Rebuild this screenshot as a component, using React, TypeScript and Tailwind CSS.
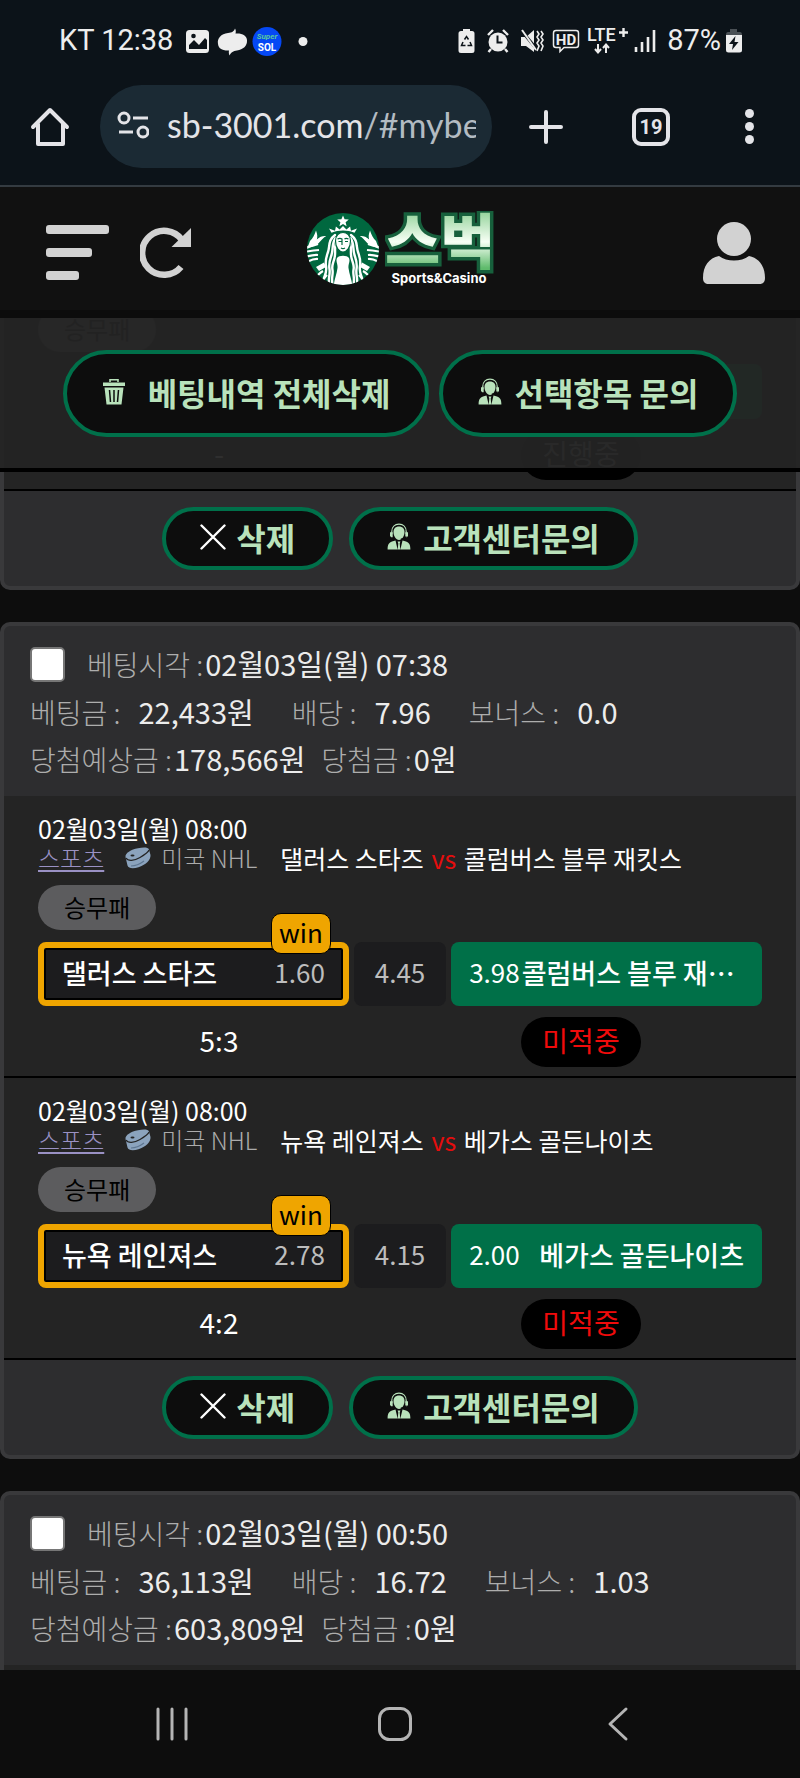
import type { ReactNode } from "react";

type Game = {
  date?: string;
  home: string;
  away: string;
  odds: [string, string, string];
  awayLabel?: string;
  score: string;
  status: string;
  win?: boolean;
};

type Slip = {
  id: string;
  placed: string;
  stake: string;
  rate: string;
  bonus: string;
  expected: string;
  paid: string;
  games: Game[];
};

const slips: Slip[] = [
  {
    id: "slip-0738",
    placed: "02월03일(월) 07:38",
    stake: "22,433원",
    rate: "7.96",
    bonus: "0.0",
    expected: "178,566원",
    paid: "0원",
    games: [
      {
        date: "02월03일(월) 08:00",
        home: "댈러스 스타즈",
        away: "콜럼버스 블루 재킷스",
        awayLabel: "콜럼버스 블루 재⋯",
        odds: ["1.60", "4.45", "3.98"],
        score: "5:3",
        status: "미적중",
        win: true,
      },
      {
        date: "02월03일(월) 08:00",
        home: "뉴욕 레인져스",
        away: "베가스 골든나이츠",
        odds: ["2.78", "4.15", "2.00"],
        score: "4:2",
        status: "미적중",
        win: true,
      },
    ],
  },
];

function SirenLogo() {
  return (
    <svg viewBox="0 0 72 72" className="size-[72px]" aria-hidden="true">
      <defs>
        <clipPath id="disc">
          <circle cx="36" cy="36" r="36" />
        </clipPath>
      </defs>
      <circle cx="36" cy="36" r="36" fill="#00683f" />
      <g clipPath="url(#disc)">
        <path d="M36 2.5l1.6 3.8 4.2.3-3.2 2.700 1 4-3.600-2.200-3.600 2.200 1-4-3.200-2.700 4.200-.3z" fill="#fff" />
        <path d="M36 13l3.400 3.400 3.700-3 .9 4.300 6-2.200-2.500 4.300c-7-3-16-3-23 0L22 15.500l6 2.200.9-4.300 3.700 3z" fill="#fff" />
        <path
          d="M9 17.500c1.500 4 1.600 6 .8 9 3-3 6.500-4 9.500-3.500-3 1.500-4.500 4-8 7.500L0 36l3-8c3-3 4.600-6 6-10.500zM63 17.500c-1.500 4-1.600 6-.8 9-3-3-6.500-4-9.500-3.500 3 1.500 4.500 4 8 7.500L72 36l-3-8c-3-3-4.600-6-6-10.500z"
          fill="#fff"
        />
        <g stroke="#fff" strokeWidth="2.200" fill="none">
          <path d="M0 34q6-1 11-3M0 38.500q7-1 12-1.500M0 43.500q7-2 11-1.500M1 48.500q6-3 10-2.500M11 62q3-3 5-4M16 67q2-3 4-5" />
          <path d="M72 34q-6-1-11-3M72 38.500q-7-1-12-1.500M72 43.500q-7-2-11-1.500M71 48.500q-6-3-10-2.500M61 62q-3-3-5-4M56 67q-2-3-4-5" />
        </g>
        <path d="M9 54l8-4.500 2 4.500-7 4zM63 54l-8-4.500-2 4.500 7 4z" fill="#fff" />
        <path d="M30 45c2-3 10-3 12 0 1.500 4-1 6-.5 10 .8 6 3 11 4 18h-19c1-7 3.200-12 4-18 .5-4-2-6-.5-10z" fill="#fff" />
        <g stroke="#fff" strokeWidth="2.400" fill="none" strokeLinecap="round">
          <path d="M28 22c-7 5-5 11-7 17s-3 8-2 14-1 9-2 12" />
          <path d="M28.500 25c-4 6-2 11-4 17s-3 8-2 14-2 10 0 17" />
          <path d="M29 30c-2 6 0 9-1.500 15s-3 7-2 12-2 9 .5 16" />
          <path d="M44 22c7 5 5 11 7 17s3 8 2 14 1 9 2 12" />
          <path d="M43.500 25c4 6 2 11 4 17s3 8 2 14 2 10 0 17" />
          <path d="M43 30c2 6 0 9 1.500 15s3 7 2 12 2 9-.5 16" />
        </g>
        <path d="M28.500 28c0-5.500 3.500-8.500 7.500-8.500s7.500 3 7.500 8.500c0 6.500-3.500 11-7.500 11s-7.500-4.500-7.500-11z" fill="#fff" stroke="#00683f" strokeWidth="1.200" />
        <path d="M30.500 26q2.500-1.400 4.500 0v6M41.500 26q-2.500-1.400-4 0M31.500 28.500h3M38 28.500h3M34 35q2 1.200 4 0" stroke="#00683f" strokeWidth="1.200" fill="none" />
      </g>
    </svg>
  );
}

function WordMark() {
  return (
    <svg viewBox="0 0 112 76" className="h-[76px] w-[112px]" role="img" aria-label="스벅 Sports&Casino">
      <defs>
        <linearGradient id="mint" x1="0" y1="0" x2="0" y2="1">
          <stop offset="0.2" stopColor="#93d39a" />
          <stop offset="0.55" stopColor="#f7fff5" />
          <stop offset="0.85" stopColor="#5fbb6c" />
        </linearGradient>
      </defs>
      <text
        x="0"
        y="53"
        fontSize="60"
        fontWeight="900"
        stroke="#17603c"
        strokeWidth="7"
        className="font-['Noto_Sans_CJK_KR',sans-serif] [fill:url(#mint)] [paint-order:stroke]"
      >
        스벅
      </text>
      <text x="54" y="72" textAnchor="middle" fontSize="13" fontWeight="700" fill="#fff" className="font-['Inter',sans-serif]">
        Sports&amp;Casino
      </text>
    </svg>
  );
}

function AgentIcon() {
  return (
    <svg viewBox="0 0 24 28" className="h-7 w-6 shrink-0" fill="#b9e2bb" aria-hidden="true">
      <path d="M12 3.500c3.500 0 5.500 2.200 5.500 5.500 0 4-2.500 8-5.500 8s-5.500-4-5.500-8c0-3.300 2-5.500 5.500-5.500z" />
      <path d="M4.800 11V8.500C4.800 4 7.800 1.200 12 1.200s7.200 2.800 7.200 7.300V11" fill="none" stroke="#b9e2bb" strokeWidth="1.200" />
      <path d="M3 9.200h2.700v5H4.200L3 13zM21 9.200h-2.700v5h1.500L21 13z" />
      <path d="M19.300 13.500c-1 2-3 2.700-5.500 2.700" fill="none" stroke="#0d0d0d" strokeWidth="1.300" />
      <path d="M8.500 17.500L10.600 26.500H.6c0-5 1.400-7 4.400-8zM15.500 17.500l-2.100 9h10c0-5-1.400-7-4.400-8zM10.600 18.500h2.800l-.7 2 .6 6h-2.600l.6-6z" />
    </svg>
  );
}

function TrashIcon() {
  return (
    <svg viewBox="0 0 24 28" className="h-7 w-6 shrink-0" aria-hidden="true">
      <path d="M1 4.500h22v3.600H1zM2.500 9.500h19l-2 17h-15z" fill="#b9e2bb" />
      <path d="M8 4V1.800h8V4" fill="none" stroke="#b9e2bb" strokeWidth="1.600" />
      <path d="M7.500 12l1 12M12 12v12M16.500 12l-1 12" stroke="#0d0d0d" strokeWidth="1.500" />
    </svg>
  );
}

function CrossIcon() {
  return (
    <svg viewBox="0 0 26 26" className="size-[26px] shrink-0" aria-hidden="true">
      <path d="M1.500 1.500l23 23M24.500 1.500l-23 23" stroke="#fff" strokeWidth="2.400" strokeLinecap="round" />
    </svg>
  );
}

function PuckIcon() {
  return (
    <svg viewBox="0 0 26 22" className="h-[22px] w-[26px] shrink-0" aria-hidden="true">
      <path d="M.5 10C0 6 6 2.500 13 1.200 19 0 23 .2 24 2.500l1.500 5.500c.5 5-5 10-12 12.200C8 22 3.500 21.500 2.500 18.500z" fill="#8ba3bd" />
      <path d="M1 11c2 3.500 8 3 14-.5 5-3 8.500-5.500 9-7.500" stroke="#242424" strokeWidth="1.200" fill="none" />
      <path d="M6 19c5 0 9-2 13-5" stroke="#5d7590" strokeWidth="1.200" fill="none" />
      <ellipse cx="7.500" cy="8.500" rx="2" ry="1.100" fill="#242424" />
    </svg>
  );
}

function Pill({ tall, gap, icon, children }: { tall?: boolean; gap: string; icon: ReactNode; children: ReactNode }) {
  return (
    <button
      type="button"
      className={`flex items-center rounded-full border-4 border-[#00704a] bg-[#0d0d0d] pb-1 text-[32px] leading-none font-bold whitespace-nowrap text-[#b9e2bb] ${
        tall ? "h-[87px] px-[35px]" : "h-[63px] px-[34px]"
      } ${gap}`}
    >
      {icon}
      <span>{children}</span>
    </button>
  );
}

function GameRow({ game }: { game: Game }) {
  const label = game.awayLabel ?? game.away;
  return (
    <section className="border-b-2 border-black bg-[#242424] px-[34px] pb-[9px]">
      {game.date && (
        <div className="pt-[17px] pb-3 text-[25px] leading-[30px] whitespace-nowrap text-white">
          <p>{game.date}</p>
          <p className="flex items-center">
            <a href="#sports" className="text-2xl leading-[30px] font-light text-[#9a91c4] underline underline-offset-2">
              스포츠
            </a>
            <span className="ml-[21px] flex items-center gap-2.5 text-2xl leading-[30px] font-light text-[#ababab]">
              <PuckIcon />
              미국 NHL
            </span>
            <span className="ml-[23px]">
              {game.home} <span className="mx-0.5 text-[#e50d0d]">vs</span> {game.away}
            </span>
          </p>
        </div>
      )}
      <span className="inline-flex h-[45px] items-center rounded-full bg-[#5c5c5e] px-[26px] pb-0.5 text-2xl leading-none text-black">
        승무패
      </span>
      <div className="mt-3 grid grid-cols-[minmax(0,310fr)_minmax(0,92fr)_minmax(0,310fr)] gap-[5px] text-[26px] leading-none text-[#bdbdbd]">
        <div
          className={`relative flex items-center justify-between rounded-lg bg-[#1c1c1e] pb-1 ${
            game.win ? "h-16 border-[6px] border-[#efa500] px-[18px] ring-2 ring-black ring-inset" : "h-[55px] px-6"
          }`}
        >
          <span className="text-[27px] font-medium whitespace-nowrap text-white">{game.home}</span>
          <span>{game.odds[0]}</span>
          {game.win && (
            <span className="absolute -top-[35px] right-[12px] flex h-[41px] items-center rounded-[10px] border border-black bg-[#efa500] px-[7px] pb-1 text-black">
              win
            </span>
          )}
        </div>
        <div className="flex items-center justify-center rounded-lg bg-[#1c1c1e] pb-1">{game.odds[1]}</div>
        <div
          className={`flex items-center rounded-lg bg-[#007048] px-[18px] pb-1 whitespace-nowrap text-white ${
            game.awayLabel ? "gap-0.5" : "justify-between"
          }`}
        >
          <span>{game.odds[2]}</span>
          <span className="text-[27px] font-medium">{label}</span>
        </div>
      </div>
      <div className="mt-[11px] grid grid-cols-2 place-items-center text-[28px] leading-none">
        <span className="pb-1 text-white">{game.score}</span>
        <span
          className={`flex h-[50px] items-center rounded-full bg-black px-[21px] pb-1 ${
            game.win ? "text-[#f00b0b]" : "text-[#8c8c8c]"
          }`}
        >
          {game.status}
        </span>
      </div>
    </section>
  );
}

function SlipHead({ slip }: { slip: Omit<Slip, "games"> }) {
  const value = "text-[29px] font-normal text-[#ececec]";
  return (
    <div className="px-[26px] pt-3.5 pb-[15px] text-[28px] font-light whitespace-nowrap text-[#adadad]">
      <div className="flex h-12 items-center">
        <input
          id={slip.id}
          type="checkbox"
          className="size-[35px] shrink-0 appearance-none rounded-[5px] border-2 border-[#767676] bg-white"
        />
        <label htmlFor={slip.id} className="ml-[22px] flex items-center gap-0.5">
          베팅시각 :<span className={value}>{slip.placed}</span>
        </label>
      </div>
      <dl className="flex h-12 items-center gap-[38px]">
        {[
          ["베팅금 :", slip.stake],
          ["배당 :", slip.rate],
          ["보너스 :", slip.bonus],
        ].map(([name, amount]) => (
          <div key={name} className="flex items-center gap-[18px]">
            <dt>{name}</dt>
            <dd className={value}>{amount}</dd>
          </div>
        ))}
      </dl>
      <dl className="flex h-[45px] items-center gap-4">
        <div className="flex items-center gap-0.5">
          <dt>당첨예상금 :</dt>
          <dd className={value}>{slip.expected}</dd>
        </div>
        <div className="flex items-center gap-0.5">
          <dt>당첨금 :</dt>
          <dd className={value}>{slip.paid}</dd>
        </div>
      </dl>
    </div>
  );
}

function SlipCard({ children }: { children: ReactNode }) {
  return <article className="shrink-0 overflow-hidden rounded-[10px] border-4 border-[#39393b] bg-[#2d2d2f]">{children}</article>;
}

function SlipActions() {
  return (
    <footer className="flex justify-center gap-4 py-4">
      <Pill gap="gap-[10px]" icon={<CrossIcon />}>
        삭제
      </Pill>
      <Pill gap="gap-3" icon={<AgentIcon />}>
        고객센터문의
      </Pill>
    </footer>
  );
}

function StatusBar() {
  return (
    <div className="flex h-[85px] items-center justify-between pr-[57px] pb-1 pl-[59px] font-['Roboto',sans-serif] text-[29px] text-[#ededed]">
      <div className="flex items-center">
        <span className="mr-3">KT 12:38</span>
        <svg viewBox="0 0 124 32" className="h-8 w-[124px]" aria-hidden="true">
          <rect x="1" y="5" width="23" height="23" rx="3.500" fill="#ededed" />
          <path d="M4 24v-4l5-5 5 5 6-7 2 2v9z" fill="#0c1319" />
          <circle cx="8.500" cy="11" r="2.300" fill="#0c1319" />
          <path d="M33 19c-1-6 3-10 10-11 4-.5 6-1.500 7-4.500 1 2 1 3 .5 5 7-.5 11 2 11.500 6.500.5 6-4 9.500-10 10.500-4 .5-5.500 1.500-7.500 5-.8-2-.8-3.500-.5-5-7 .3-10.500-2-11-6.500z" fill="#ededed" />
          <circle cx="82" cy="16.500" r="14.500" fill="#0548f5" />
          <text x="82" y="14" textAnchor="middle" fontSize="8" fontStyle="italic" fontWeight="700" fill="#58c7a0">
            Super
          </text>
          <text x="82" y="26" textAnchor="middle" fontSize="10" fontWeight="700" fill="#fff">
            SOL
          </text>
          <circle cx="118" cy="16.500" r="4.500" fill="#ededed" />
        </svg>
      </div>
      <div className="flex items-center">
        <svg viewBox="0 0 200 30" className="mr-2.5 h-[30px] w-[200px]" fill="#ededed" aria-hidden="true">
          <path d="M6 3h7v3h-7zM4 5h11q2.500 0 2.500 2.500v17q0 2.500-2.500 2.500H4q-2.500 0-2.500-2.500v-17Q1.500 5 4 5z" />
          <path d="M7.500 13.500l2-3 2 3M13 16l1.500 3.500h-4M8.500 19.500h-4L6 16" stroke="#0c1319" strokeWidth="1.500" fill="none" />
          <circle cx="41" cy="16" r="9.500" />
          <path d="M31 9l5-5M51 9l-5-5M34 23l-2.500 3M48 23l2.500 3" stroke="#ededed" strokeWidth="2.400" />
          <path d="M40.500 9.500v7h5" stroke="#0c1319" strokeWidth="2" fill="none" />
          <path d="M64 11h5l8-7v22l-8-6h-5z" />
          <path d="M64 4l18 22" stroke="#0c1319" strokeWidth="3" />
          <path d="M65 4l14 20" stroke="#ededed" strokeWidth="2" />
          <path d="M80 5l2 3-2 3 2 3-2 3 2 3-2 5M84 5l2 3-2 3 2 3-2 3 2 3-2 5" stroke="#ededed" strokeWidth="1.600" fill="none" />
          <path d="M99 4.500h20q2.500 0 2.500 2.500v12q0 2.500-2.500 2.500h-12l-4 4v-4h-4q-2.500 0-2.500-2.500V7q0-2.500 2.500-2.500z" fill="none" stroke="#ededed" strokeWidth="1.500" />
          <text x="109" y="18.500" textAnchor="middle" fontSize="15" fontWeight="700">
            HD
          </text>
          <text x="130" y="15" fontSize="18" fontWeight="500">
            LTE
          </text>
          <path d="M166.500 2v9M162 6.500h9" stroke="#ededed" strokeWidth="2.400" />
          <path d="M141 18v8M138 23l3 3.500 3-3.500M149 27v-8M146 22l3-3.500 3 3.500" stroke="#ededed" strokeWidth="2" fill="none" />
          <path d="M179 21v5M185 16v10M191 11v15M197 4v22" stroke="#ededed" strokeWidth="2.600" />
        </svg>
        <span className="mr-1">87%</span>
        <svg viewBox="0 0 18 26" className="h-[26px] w-[18px]" aria-hidden="true">
          <path d="M5 1h7v3h3q2 0 2 3H1q0-3 2-3h2z" fill="#4a5055" />
          <path d="M1 7h16v15q0 2.500-2.500 2.500h-11Q1 24.500 1 22z" fill="#ededed" />
          <path d="M10.500 8L4 16h4l-1 6 6.500-8h-4z" fill="#0c1319" />
        </svg>
      </div>
    </div>
  );
}

function BrowserBar() {
  return (
    <div className="flex h-[100px] items-start justify-between pr-[46px] pl-[30px] text-[#e4e4e8]">
      <div className="flex min-w-0 items-center gap-[30px]">
        <button type="button" aria-label="Home" className="shrink-0">
          <svg viewBox="0 0 40 40" className="size-10" fill="none" stroke="currentColor" strokeWidth="4" strokeLinecap="round" strokeLinejoin="round">
            <path d="M3 20L20 3l17 17M8 17v20h25V17" />
          </svg>
        </button>
        <button type="button" className="flex h-[83px] w-[392px] min-w-0 items-center rounded-full bg-[#1b2a34] pr-4 pb-1 pl-[17px]">
          <svg viewBox="0 0 32 28" className="mr-[18px] h-7 w-8 shrink-0" fill="none" stroke="currentColor" strokeWidth="3">
            <circle cx="7" cy="7" r="5" />
            <path d="M16 7h15M2 21h14" />
            <circle cx="26" cy="21" r="5" />
          </svg>
          <span className="min-w-0 overflow-hidden font-['Lato',sans-serif] text-[34px] whitespace-nowrap">
            sb-3001.com<span className="text-[#b3bbc2]">/#mybe</span>
          </span>
        </button>
      </div>
      <div className="flex h-[83px] items-center">
        <button type="button" aria-label="New tab" className="mr-[68px]">
          <svg viewBox="0 0 36 36" className="size-9" stroke="currentColor" strokeWidth="4" strokeLinecap="round">
            <path d="M18 3v30M3 18h30" />
          </svg>
        </button>
        <button
          type="button"
          className="mr-[75px] flex size-[38px] items-center justify-center rounded-[9px] border-4 border-[#e4e4e8] font-['Roboto',sans-serif] text-xl leading-none font-bold"
        >
          19
        </button>
        <button type="button" aria-label="Menu" className="flex flex-col gap-1">
          <i className="size-[9px] rounded-full bg-[#e4e4e8]" />
          <i className="size-[9px] rounded-full bg-[#e4e4e8]" />
          <i className="size-[9px] rounded-full bg-[#e4e4e8]" />
        </button>
      </div>
    </div>
  );
}

export default function App() {
  return (
    <div className="flex h-screen flex-col overflow-hidden bg-[#0d0d0d] font-['Noto_Sans_CJK_KR',sans-serif]">
      <div className="shrink-0 border-b-2 border-[#343b41] bg-[#0c1319]">
        <StatusBar />
        <BrowserBar />
      </div>

      <header className="grid h-[131px] shrink-0 grid-cols-3 items-center border-b-8 border-[#0c0c0c] bg-[#111111] pt-2 pr-[34px] pl-[46px]">
        <div className="flex items-center gap-[31px]">
          <button type="button" aria-label="Menu" className="flex h-[55px] w-[63px] flex-col justify-between">
            <i className="h-[9px] w-full rounded-[3px] bg-[#d2d2d2]" />
            <i className="h-[9px] w-[46px] rounded-[3px] bg-[#d2d2d2]" />
            <i className="h-[9px] w-[33px] rounded-[3px] bg-[#d2d2d2]" />
          </button>
          <button type="button" aria-label="Refresh">
            <svg viewBox="0 0 52 52" className="size-[52px]" aria-hidden="true">
              <path d="M41 40A22 22 0 1 1 42 13" fill="none" stroke="#d2d2d2" strokeWidth="6.500" />
              <path d="M51 1v19H31.500z" fill="#d2d2d2" />
            </svg>
          </button>
        </div>
        <div className="flex items-center justify-center gap-1.5 pr-2 pb-2">
          <SirenLogo />
          <WordMark />
        </div>
        <button type="button" aria-label="Account" className="justify-self-end">
          <svg viewBox="0 0 64 64" className="size-16" fill="#d2d2d2" aria-hidden="true">
            <circle cx="32" cy="18" r="17" />
            <path d="M17 35c8 6 22 6 30 0 10 2 16 10 16 22 0 4-2 6-6 6H7c-4 0-6-2-6-6 0-12 6-20 16-22z" />
          </svg>
        </button>
      </header>

      <main className="relative min-h-0 flex-1 overflow-hidden">
        <div className="-mt-[15px] flex flex-col gap-8">
          <SlipCard>
            <GameRow game={{ home: "", away: "", odds: ["", "", ""], score: "-", status: "진행중" }} />
            <SlipActions />
          </SlipCard>
          {slips.map((slip) => (
            <SlipCard key={slip.id}>
              <SlipHead slip={slip} />
              {slip.games.map((game) => (
                <GameRow key={game.home} game={game} />
              ))}
              <SlipActions />
            </SlipCard>
          ))}
          <SlipCard>
            <SlipHead
              slip={{
                id: "slip-0050",
                placed: "02월03일(월) 00:50",
                stake: "36,113원",
                rate: "16.72",
                bonus: "1.03",
                expected: "603,809원",
                paid: "0원",
              }}
            />
            <div className="h-12 bg-[#242424]" />
          </SlipCard>
        </div>
        <div className="absolute inset-x-0 top-0 flex h-[154px] items-start justify-center gap-2.5 border-b-4 border-black bg-[#242424]/95 bg-clip-padding pt-8">
          <Pill tall gap="gap-[22px]" icon={<TrashIcon />}>
            베팅내역 전체삭제
          </Pill>
          <Pill tall gap="gap-3" icon={<AgentIcon />}>
            선택항목 문의
          </Pill>
        </div>
      </main>

      <nav className="flex h-[108px] shrink-0 items-center justify-around bg-[#0d0d0d] pr-[69px] pl-[60px] text-[#b4b4b4]">
        <button type="button" aria-label="Recent apps">
          <svg viewBox="0 0 36 36" className="size-9" stroke="currentColor" strokeWidth="3" strokeLinecap="round">
            <path d="M4 3v30M18 3v30M32 3v30" />
          </svg>
        </button>
        <button type="button" aria-label="Home">
          <svg viewBox="0 0 36 36" className="size-9" fill="none" stroke="currentColor" strokeWidth="3">
            <rect x="2.500" y="2.500" width="31" height="31" rx="10" />
          </svg>
        </button>
        <button type="button" aria-label="Back">
          <svg viewBox="0 0 36 36" className="size-9" fill="none" stroke="currentColor" strokeWidth="3" strokeLinecap="round" strokeLinejoin="round">
            <path d="M25 3L9 18l16 15" />
          </svg>
        </button>
      </nav>
    </div>
  );
}
